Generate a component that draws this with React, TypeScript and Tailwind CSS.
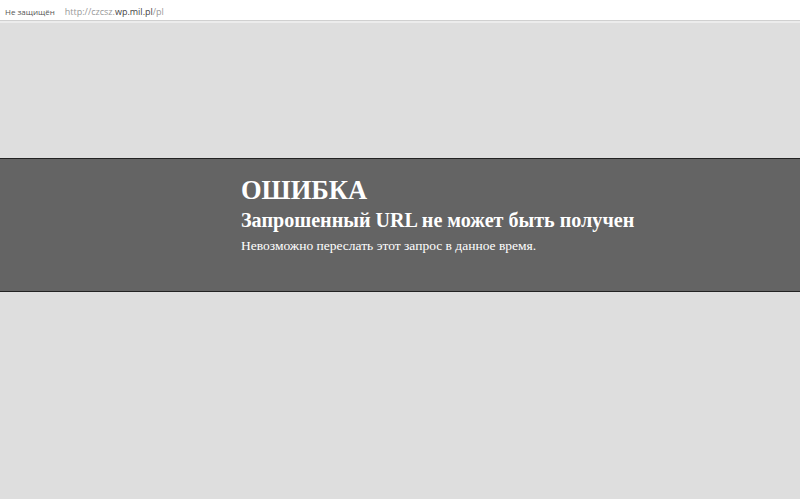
export default function App() {
  return (
    <div className="w-[800px] h-[499px] bg-[#dedede] flex flex-col overflow-hidden">
      <div className="h-[21px] bg-white border-b border-[#d0d0d0] flex items-center pl-[5px] pt-[3px] gap-[10px] shrink-0" style={{ fontFamily: '"Open Sans", "DejaVu Sans", sans-serif' }}>
        <span className="text-[8px] text-[#555]">Не защищён</span>
        <span className="text-[9px] text-[#999]">http://czcsz.<span className="text-[#444]">wp.mil.pl</span>/pl</span>
      </div>
      <div className="h-[2px] bg-[#ececec] shrink-0" />
      <div className="h-[135px] shrink-0" />
      <div className="h-[134px] bg-[#646464] border-t border-b border-[#222] shrink-0 pl-[241px] pt-[16px] text-white" style={{ fontFamily: '"Liberation Serif", "Times New Roman", serif' }}>
        <div className="text-[26.5px] font-bold leading-[30px]">ОШИБКА</div>
        <div className="text-[20.1px] font-bold leading-[31px]">Запрошенный URL не может быть получен</div>
        <div className="text-[13.5px] leading-[20px]">Невозможно переслать этот запрос в данное время.</div>
      </div>
    </div>
  );
}
